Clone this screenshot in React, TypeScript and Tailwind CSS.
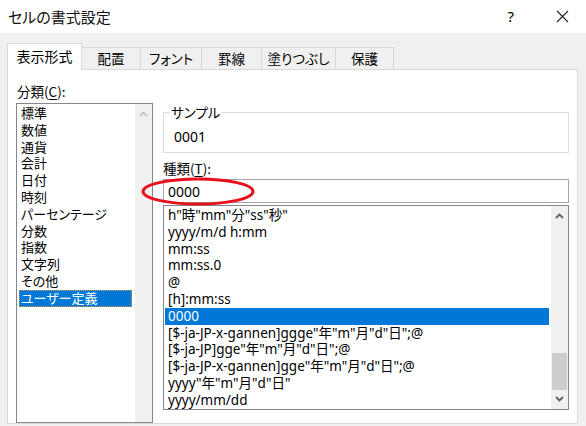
import React from "react";

const leftItems = [
  "標準",
  "数値",
  "通貨",
  "会計",
  "日付",
  "時刻",
  "パーセンテージ",
  "分数",
  "指数",
  "文字列",
  "その他",
  "ユーザー定義",
];

const rightItems = [
  'h"時"mm"分"ss"秒"',
  "yyyy/m/d h:mm",
  "mm:ss",
  "mm:ss.0",
  "@",
  "[h]:mm:ss",
  "0000",
  '[$-ja-JP-x-gannen]ggge"年"m"月"d"日";@',
  '[$-ja-JP]gge"年"m"月"d"日";@',
  '[$-ja-JP-x-gannen]gge"年"m"月"d"日";@',
  'yyyy"年"m"月"d"日"',
  "yyyy/mm/dd",
];

const tabs = [
  { label: "配置", w: "w-[59px]" },
  { label: "フォント", w: "w-[61px]" },
  { label: "罫線", w: "w-[60px]" },
  { label: "塗りつぶし", w: "w-[74px]" },
  { label: "保護", w: "w-[58px]" },
];

function ChevronUp({ color }: { color: string }) {
  return (
    <svg width="9" height="6" viewBox="0 0 9 6">
      <path d="M1 5 L4.5 1.5 L8 5" fill="none" stroke={color} strokeWidth="1.8" />
    </svg>
  );
}

function ChevronDown({ color }: { color: string }) {
  return (
    <svg width="9" height="6" viewBox="0 0 9 6">
      <path d="M1 1 L4.5 4.5 L8 1" fill="none" stroke={color} strokeWidth="1.8" />
    </svg>
  );
}

export default function App() {
  return (
    <div className="relative w-[586px] h-[426px] overflow-hidden bg-[#f0f0f0] text-[#000] font-['Noto_Sans_CJK_JP',sans-serif] [font-feature-settings:'palt']">
      {/* Title bar */}
      <div className="h-[33px] bg-white flex items-center pl-[8px] pr-[16px]">
        <div className="text-[15px] leading-none text-[#111]">セルの書式設定</div>
        <div className="flex-1" />
        <div className="text-[15px] leading-none font-['Noto_Sans',sans-serif] mr-[42px]">?</div>
        <svg width="13" height="13" viewBox="0 0 13 13" className="mr-[1px]">
          <path d="M1 1 L12 12 M12 1 L1 12" stroke="#222" strokeWidth="1.1" />
        </svg>
      </div>

      {/* Tabs */}
      <div className="mt-[10px] h-[26px] pl-[7px] flex items-end">
        <div className="relative z-10 -mb-px h-[27px] w-[75px] bg-white border-l border-t border-r border-[#d9d9d9] flex items-center justify-center pb-[2px] text-[14px] leading-none">
          表示形式
        </div>
        {tabs.map((t) => (
          <div
            key={t.label}
            className={`${t.w} h-[22px] bg-[#f0f0f0] border-t border-r border-[#d9d9d9] flex items-center justify-center pt-[1px] text-[13.5px] leading-none`}
          >
            {t.label}
          </div>
        ))}
      </div>

      {/* Panel */}
      <div className="ml-[7px] w-[571px] h-[355px] bg-white border border-[#d9d9d9] overflow-hidden flex">
        {/* Left column */}
        <div className="pl-[8px] flex flex-col">
          <div className="mt-[11px] h-[20px] leading-[20px] text-[13.5px] pl-[1px]">
            分類(<span className="underline underline-offset-2">C</span>):
          </div>
          <div className="mt-[2px] w-[137px] h-[330px] border border-[#828790] flex">
            <div className="flex-1 pt-[1px] pl-[2px] pr-[3px]">
              {leftItems.map((it) => {
                const sel = it === "ユーザー定義";
                return (
                  <div
                    key={it}
                    className={`h-[16.8px] leading-[16.8px] pl-[2px] text-[13px] whitespace-nowrap ${
                      sel ? "bg-[#0078d7] text-white outline-1 outline-dotted outline-[#d89a50] -outline-offset-1" : ""
                    }`}
                  >
                    {it}
                  </div>
                );
              })}
            </div>
            <div className="w-[17px] bg-[#f0f0f0] flex flex-col items-center">
              <div className="h-[17px] flex items-center justify-center pt-[2px]">
                <ChevronUp color="#c4c4c4" />
              </div>
            </div>
          </div>
        </div>

        {/* Right column */}
        <div className="ml-[10px] w-[406px] flex flex-col">
          {/* Sample group */}
          <div className="relative mt-[42px] h-[41px] border border-[#dcdcdc]">
            <div className="absolute -top-[9px] left-[6px] bg-white px-[1px] text-[13.5px] leading-[16px]">
              サンプル
            </div>
            <div className="pt-[15px] pl-[10px] leading-[18px] text-[14px] font-['Noto_Sans','Noto_Sans_CJK_JP',sans-serif]">
              0001
            </div>
          </div>

          <div className="mt-[5px] h-[20px] leading-[20px] text-[13.5px]">
            種類(<span className="underline underline-offset-2">T</span>):
          </div>

          <div className="mt-[1px] h-[24px] border border-[#a6a6a6] flex items-center pl-[4px] text-[14px] font-['Noto_Sans','Noto_Sans_CJK_JP',sans-serif]">
            0000
          </div>

          {/* Format list */}
          <div className="mt-[2px] h-[205px] border border-[#828790] flex">
            <div className="flex-1 pt-[1px] pl-[1px] pr-[2px] overflow-hidden">
              {rightItems.map((it) => {
                const sel = it === "0000";
                return (
                  <div
                    key={it}
                    className={`h-[16.8px] leading-[16.8px] pl-[3px] text-[13.5px] whitespace-nowrap font-['Noto_Sans','Noto_Sans_CJK_JP',sans-serif] ${
                      sel ? "bg-[#0078d7] text-white" : ""
                    }`}
                  >
                    {it}
                  </div>
                );
              })}
            </div>
            <div className="w-[17px] bg-[#f0f0f0] flex flex-col items-center">
              <div className="h-[17px] w-full flex items-center justify-center pt-[3px]">
                <ChevronUp color="#606060" />
              </div>
              <div className="flex-1 w-full pt-[130px]">
                <div className="h-[37px] mx-[1px] bg-[#cdcdcd]" />
              </div>
              <div className="h-[17px] w-full flex items-center justify-center pb-[3px]">
                <ChevronDown color="#606060" />
              </div>
            </div>
          </div>
        </div>
      </div>

      {/* Red annotation ellipse */}
      <svg className="absolute left-[140px] top-[176px] pointer-events-none" width="118" height="32" viewBox="0 0 118 32">
        <ellipse cx="58" cy="15.5" rx="55" ry="12.5" fill="none" stroke="#e8101a" strokeWidth="3" />
      </svg>
    </div>
  );
}
